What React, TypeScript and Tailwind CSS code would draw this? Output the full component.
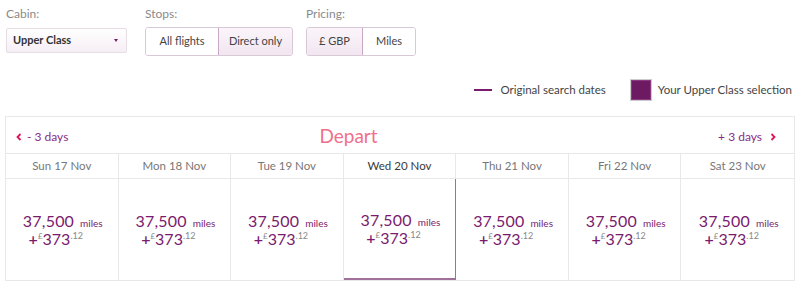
import React from "react";

const days = ["Sun 17 Nov", "Mon 18 Nov", "Tue 19 Nov", "Wed 20 Nov", "Thu 21 Nov", "Fri 22 Nov", "Sat 23 Nov"];

function Price() {
  return (
    <div className="flex flex-col items-center text-[#7a1b6e]">
      <div className="flex items-baseline ml-[2px] h-[18px] leading-[18px]">
        <span className="text-[16px] tracking-[0.2px]">37,500</span>
        <span className="text-[10px] ml-[6px]">miles</span>
      </div>
      <div className="flex items-start ml-[-12px] h-[18px] leading-[18px]">
        <span className="text-[16px] font-semibold">+</span>
        <span className="text-[8px] text-[#888] leading-[12px]">£</span>
        <span className="text-[16px]">373</span>
        <span className="text-[9px] text-[#888] leading-[12px]">.12</span>
      </div>
    </div>
  );
}

export default function App() {
  return (
    <div className="w-[800px] h-[287px] bg-white overflow-hidden" style={{ fontFamily: "Lato, 'Open Sans', sans-serif" }}>
      <div className="flex pt-[7px] pl-[6px]">
        <div className="flex flex-col">
          <span className="text-[12px] text-[#8a8a8a] leading-[14px]">Cabin:</span>
          <div className="mt-[7px] w-[121px] h-[25px] border border-[#e6dde4] rounded-[2px] bg-gradient-to-b from-white to-[#f6eef5] flex items-center justify-between px-[6px]">
            <span className="text-[11px] font-bold text-[#333]">Upper Class</span>
            <span className="w-0 h-0 border-l-[2px] border-r-[2px] border-t-[3px] border-l-transparent border-r-transparent border-t-[#7a1b6e] mr-[2px]"></span>
          </div>
        </div>
        <div className="flex flex-col ml-[18px]">
          <span className="text-[12px] text-[#8a8a8a] leading-[14px]">Stops:</span>
          <div className="mt-[6px] flex h-[29px] border border-[#d9c8d6] rounded-[3px] overflow-hidden">
            <div className="w-[72px] flex items-center justify-center text-[11px] text-[#444] bg-white">All flights</div>
            <div className="w-[74px] flex items-center justify-center text-[11px] text-[#444] bg-gradient-to-b from-[#faf5fa] to-[#f2e6f1] border-l border-[#c9a8c4]">Direct only</div>
          </div>
        </div>
        <div className="flex flex-col ml-[13px]">
          <span className="text-[12px] text-[#8a8a8a] leading-[14px]">Pricing:</span>
          <div className="mt-[6px] flex h-[29px] border border-[#d9c8d6] rounded-[3px] overflow-hidden">
            <div className="w-[56px] flex items-center justify-center text-[11px] text-[#444] bg-gradient-to-b from-[#faf5fa] to-[#f2e6f1] border-r border-[#c9a8c4]">£ GBP</div>
            <div className="w-[52px] flex items-center justify-center text-[11px] text-[#444] bg-white">Miles</div>
          </div>
        </div>
      </div>

      <div className="flex items-center justify-end pr-[8px] mt-[23px] h-[22px]">
        <span className="w-[18px] h-[2px] bg-[#7a1b6e]"></span>
        <span className="ml-[8px] text-[11.5px] text-[#444]">Original search dates</span>
        <span className="ml-[24px] w-[22px] h-[22px] border border-[#ccc] bg-[#6e1a62] shadow-[inset_0_0_0_1px_#8a3a7e]"></span>
        <span className="ml-[6px] text-[11.5px] text-[#444]">Your Upper Class selection</span>
      </div>

      <div className="mx-[5px] mt-[15px] w-[790px] border border-[#e8e8e8]">
        <div className="h-[37px] flex items-center border-b border-[#e8e8e8] px-[8px] pt-[4px]">
          <svg width="6" height="8" viewBox="0 0 6 8" className="ml-[2px]">
            <path d="M4.5 1 L1.5 4 L4.5 7" fill="none" stroke="#e0145a" strokeWidth="1.8" />
          </svg>
          <span className="ml-[5px] text-[12px] text-[#8b2c84]">- 3 days</span>
          <span className="ml-[251px] text-[19px] text-[#f0708a] leading-none mb-[3px]">Depart</span>
          <span className="ml-auto text-[12px] text-[#8b2c84]">+ 3 days</span>
          <svg width="6" height="8" viewBox="0 0 6 8" className="ml-[8px] mr-[10px]">
            <path d="M1.5 1 L4.5 4 L1.5 7" fill="none" stroke="#e0145a" strokeWidth="1.8" />
          </svg>
        </div>
        <div className="grid grid-cols-7">
          {days.map((d, i) => (
            <div key={d} className={`h-[25px] flex items-center justify-center text-[11.5px] border-b border-[#e8e8e8] ${i < 6 ? "border-r" : ""} ${i === 3 ? "text-[#3a3a3a]" : "text-[#777]"}`}>
              {d}
            </div>
          ))}
          {days.map((d, i) => (
            <div key={d + "p"} className={`h-[101px] flex items-center justify-center ${i === 3 ? "border-r border-b-2 border-r-[#a0709a] border-b-[#a0709a] -mb-[1px]" : i < 6 ? "border-r border-[#e8e8e8]" : ""}`}>
              <Price />
            </div>
          ))}
        </div>
      </div>
    </div>
  );
}
